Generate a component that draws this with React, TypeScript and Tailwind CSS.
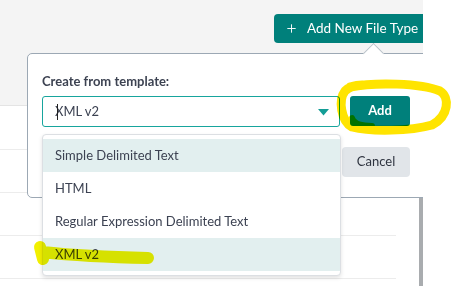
import React from "react";
import { Plus } from "lucide-react";

const options = [
  { label: "Simple Delimited Text", active: true },
  { label: "HTML", active: false },
  { label: "Regular Expression Delimited Text", active: false },
  { label: "XML v2", active: true },
];

export default function App() {
  return (
    <div className="relative w-[453px] h-[286px] overflow-hidden bg-white font-['Lato',sans-serif] text-[#3c4252]">
      {/* app frame, clipped at 423px */}
      <div className="relative w-[423px] h-[286px] overflow-hidden">
        <div className="h-[106px] bg-[#f4f4f4] border-b border-[#e4e4e4] flex justify-end pt-[14px]">
          <button className="h-[29px] w-[149px] rounded-tl-[4px] rounded-bl-[4px] bg-[#00807b] text-white text-[13.5px] flex items-center pl-[11px] gap-[9px]">
            <Plus className="w-[13px] h-[13px]" strokeWidth={1.75} />
            <span>Add New File Type</span>
          </button>
        </div>
        <div className="flex">
          <div className="w-[396px] flex flex-col">
            <div className="h-[44px] border-b border-[#ececec]" />
            <div className="h-[43px] border-b border-[#ececec]" />
            <div className="h-[43px] border-b border-[#ececec]" />
            <div className="h-[43px] border-b border-[#ececec]" />
          </div>
          <div className="flex-1" />
          <div className="w-[4px] h-[180px] bg-[#a9acaf]" />
        </div>

        {/* popover */}
        <div className="absolute left-[27px] top-[53px] w-[440px] h-[145px] bg-white border border-[#9ca8b4] rounded-[5px]">
          <div className="absolute -top-[8px] left-[338px] w-[15px] h-[15px] rotate-45 bg-white border-l border-t border-[#b9c1c9]" />
          <div className="relative pl-[14px] pt-[19px]">
            <div className="text-[13px] font-bold text-[#3d4352] leading-[16px]">Create from template:</div>
            <div className="flex mt-[7px] gap-[2px]">
              <div className="relative w-[298px] h-[31px] border border-[#17a59d] rounded-[3px] flex items-center pl-[12px] text-[13px]">
                <span className="w-px h-[16px] bg-[#222] absolute left-[14px]" />
                <span>XML v2</span>
                <svg className="absolute right-[10px] top-[12px]" width="11" height="7" viewBox="0 0 11 7">
                  <path d="M0 0H11L5.5 6.5Z" fill="#139d96" />
                </svg>
              </div>
              <div className="w-[68px] flex flex-col items-end gap-[21px]">
                <button className="w-[60px] h-[30px] rounded-[3px] bg-[#00807b] text-white text-[13px] font-bold">Add</button>
                <button className="w-[68px] h-[30px] rounded-[4px] bg-[#e1e5e9] text-[#2f3440] text-[13px]">Cancel</button>
              </div>
            </div>
          </div>
        </div>

        {/* dropdown menu */}
        <div className="absolute left-[42px] top-[134px] w-[299px] h-[142px] bg-white border border-[#dcdfe3] rounded-[4px] shadow-[0_2px_4px_rgba(0,0,0,0.12)] py-[4px]">
          {options.map((o) => (
            <div
              key={o.label}
              className={`h-[33px] flex items-center pl-[12px] text-[13px] text-[#3c4252] ${o.active ? "bg-[#e2efef]" : ""}`}
            >
              {o.label}
            </div>
          ))}
        </div>
      </div>

      {/* yellow marker annotations */}
      <svg className="absolute inset-0 pointer-events-none mix-blend-multiply" width="453" height="286">
        <path
          d="M350 87 C 375 82, 420 83, 440 91 C 450 97, 449 116, 432 125 C 410 131, 372 132, 352 127 C 341 121, 338 100, 345 91 C 349 87, 356 85, 362 85"
          fill="none"
          stroke="#ffe400"
          strokeWidth="9"
          strokeLinecap="round"
        />
        <path d="M352 118 C 354 124, 362 126, 372 126" fill="none" stroke="#ffe400" strokeWidth="6" strokeLinecap="round" />
        <path d="M40 247 L 43 259 M42 252 C 70 255, 100 257, 148 258" fill="none" stroke="#f2f000" strokeWidth="12" strokeLinecap="round" />
      </svg>
    </div>
  );
}
